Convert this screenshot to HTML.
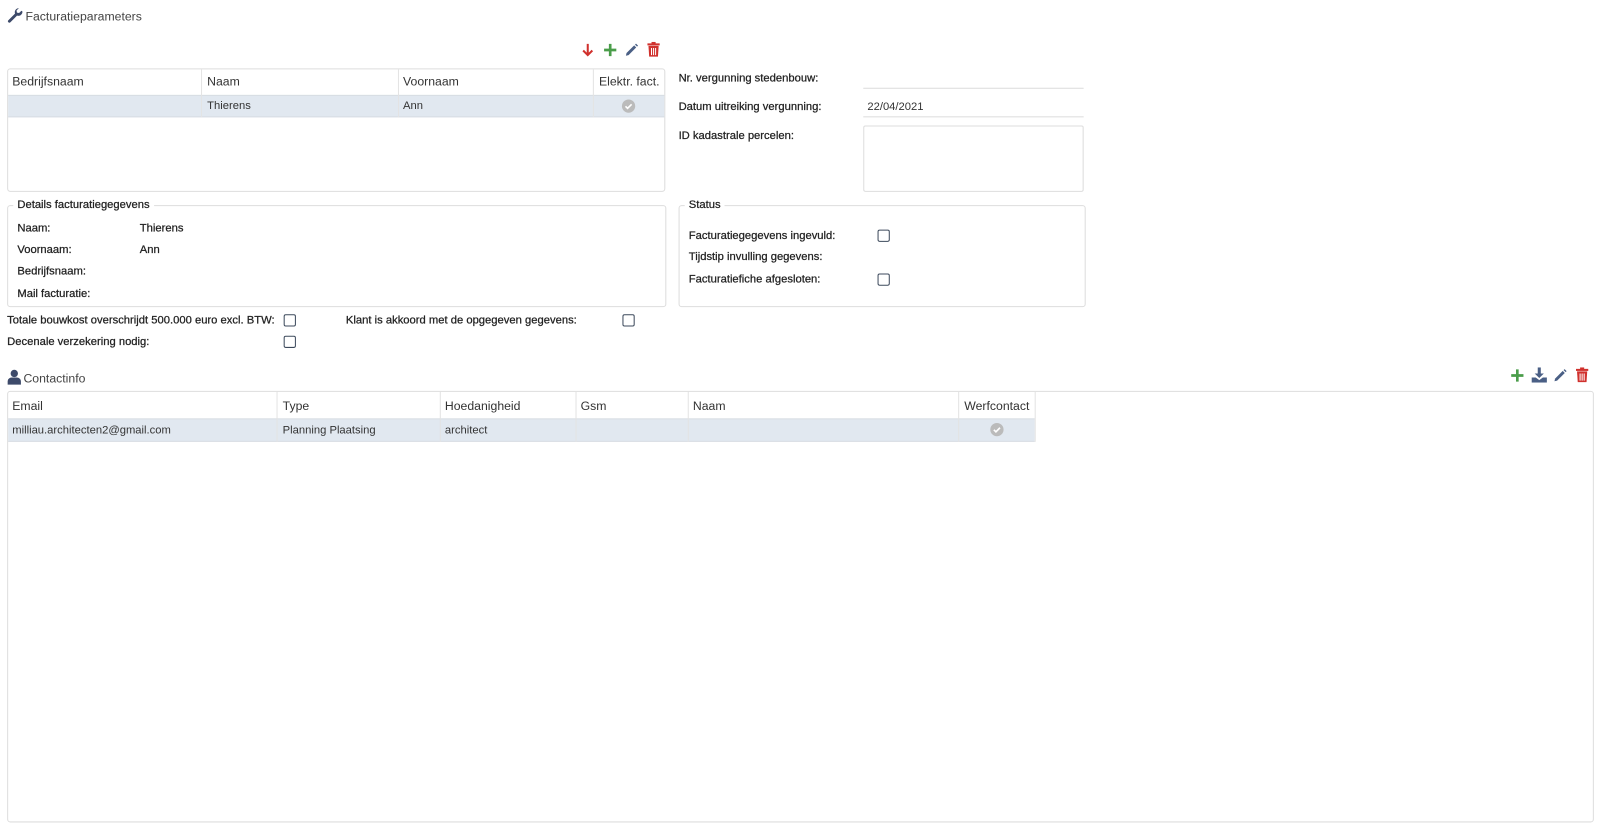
<!DOCTYPE html>
<html><head><meta charset="utf-8"><style>
*{box-sizing:border-box;margin:0;padding:0}
body{width:1600px;height:830px;background:#fff;font-family:"Liberation Sans",sans-serif;font-size:11px;color:#333;position:relative;overflow:hidden}
#w{position:absolute;left:0;top:0;width:1568px;height:814px;transform:scale(1.0204);transform-origin:0 0}
.a{position:absolute;white-space:nowrap}
.box{position:absolute;border:1px solid #ddd;border-radius:3px}
.cb{position:absolute;width:12px;height:12px;border:1.5px solid #3d4a5c;border-radius:2px}
.th{position:absolute;font-size:12px;color:#333}
.vl{position:absolute;width:1px;background:#e3e3e3}
.b{color:#222;-webkit-text-stroke:0.25px #222}
svg{position:absolute}
</style></head><body><div id="w">
<svg style="left:7px;top:7px" width="16" height="16" viewBox="0 0 16 16"><path d="M15 4.5a4 4 0 0 1-5.3 3.8L3.2 14.8a1.4 1.4 0 0 1-2-2l6.5-6.5A4 4 0 0 1 11.5 1l-2.3 2.3.4 2.1 2.1.4L14 3.5c.6.3 1 .6 1 1z" fill="#3d4a6a"/></svg>
<div class="a" style="left:25px;top:9px;font-size:12px;color:#444">Facturatieparameters</div>

<svg style="left:570px;top:42px" width="12" height="14" viewBox="0 0 12 14"><path d="M6 1v11M1.5 7.5 6 12l4.5-4.5" stroke="#d0312d" stroke-width="2" fill="none"/></svg>
<svg style="left:591px;top:42px" width="14" height="14" viewBox="0 0 14 14"><path d="M7 1v12M1 7h12" stroke="#4a9d4a" stroke-width="2.6"/></svg>
<svg style="left:612px;top:42px" width="14" height="14" viewBox="0 0 14 14"><path d="M2 10 9.5 2.5l2 2L4 12l-2.6.6z" fill="#4a5f85"/><path d="M10.3 1.7l1-1 2 2-1 1z" fill="#4a5f85"/></svg>
<svg style="left:634px;top:41px" width="13" height="15" viewBox="0 0 13 15"><rect x="0.5" y="1.5" width="12" height="2" fill="#d0312d"/><rect x="4.5" y="0" width="4" height="2" fill="#d0312d"/><path d="M1.5 4h10l-.7 10.5H2.2z" fill="#d0312d"/><path d="M4.5 6v7M6.5 6v7M8.5 6v7" stroke="#fff" stroke-width="1"/></svg>

<div class="box" style="left:7px;top:67px;width:645px;height:121px"></div>
<div class="a" style="left:8px;top:93px;width:643px;height:22px;background:#e1e8f0;border-top:1px solid #d8dde3;border-bottom:1px solid #d8dde3"></div>
<div class="vl" style="left:197px;top:68px;height:47px"></div>
<div class="vl" style="left:390px;top:68px;height:47px"></div>
<div class="vl" style="left:581px;top:68px;height:47px"></div>
<div class="th" style="left:12px;top:73px">Bedrijfsnaam</div>
<div class="th" style="left:203px;top:73px">Naam</div>
<div class="th" style="left:395px;top:73px">Voornaam</div>
<div class="th" style="left:587px;top:73px">Elektr. fact.</div>
<div class="a" style="left:203px;top:98px">Thierens</div>
<div class="a" style="left:395px;top:98px">Ann</div>
<svg style="left:609px;top:97px" width="14" height="14" viewBox="0 0 14 14"><circle cx="7" cy="7" r="6.5" fill="#bbb"/><path d="M4 7.2l2 2 4-4" stroke="#fff" stroke-width="1.6" fill="none"/></svg>

<div class="a b" style="left:665px;top:71px">Nr. vergunning stedenbouw:</div>
<div class="a b" style="left:665px;top:99px">Datum uitreiking vergunning:</div>
<div class="a b" style="left:665px;top:127px">ID kadastrale percelen:</div>
<div class="a" style="left:846px;top:86px;width:216px;height:1px;background:#ddd"></div>
<div class="a" style="left:850px;top:99px">22/04/2021</div>
<div class="a" style="left:846px;top:114px;width:216px;height:1px;background:#ddd"></div>
<div class="box" style="left:846px;top:123px;width:216px;height:65px;border-radius:2px"></div>

<div class="box" style="left:7px;top:201px;width:646px;height:100px"></div>
<div class="a b" style="left:13px;top:195px;background:#fff;padding:0 4px">Details facturatiegegevens</div>
<div class="a b" style="left:17px;top:218px">Naam:</div><div class="a b" style="left:137px;top:218px">Thierens</div>
<div class="a b" style="left:17px;top:239px">Voornaam:</div><div class="a b" style="left:137px;top:239px">Ann</div>
<div class="a b" style="left:17px;top:260px">Bedrijfsnaam:</div>
<div class="a b" style="left:17px;top:282px">Mail facturatie:</div>

<div class="box" style="left:665px;top:201px;width:399px;height:100px"></div>
<div class="a b" style="left:671px;top:195px;background:#fff;padding:0 4px">Status</div>
<div class="a b" style="left:675px;top:225px">Facturatiegegevens ingevuld:</div><div class="cb" style="left:860px;top:225px"></div>
<div class="a b" style="left:675px;top:246px">Tijdstip invulling gegevens:</div>
<div class="a b" style="left:675px;top:268px">Facturatiefiche afgesloten:</div><div class="cb" style="left:860px;top:268px"></div>

<div class="a b" style="left:7px;top:308px">Totale bouwkost overschrijdt 500.000 euro excl. BTW:</div><div class="cb" style="left:278px;top:308px"></div>
<div class="a b" style="left:339px;top:308px">Klant is akkoord met de opgegeven gegevens:</div><div class="cb" style="left:610px;top:308px"></div>
<div class="a b" style="left:7px;top:329px">Decenale verzekering nodig:</div><div class="cb" style="left:278px;top:329px"></div>

<svg style="left:7px;top:362px" width="14" height="15" viewBox="0 0 14 15"><circle cx="7" cy="4" r="3.6" fill="#3d4a6a"/><path d="M0.5 15v-3c0-2.5 2-4 4-4h5c2 0 4 1.5 4 4v3z" fill="#3d4a6a"/></svg>
<div class="a" style="left:23px;top:364px;font-size:12px;color:#444">Contactinfo</div>

<svg style="left:1480px;top:361px" width="14" height="14" viewBox="0 0 14 14"><path d="M7 1v12M1 7h12" stroke="#4a9d4a" stroke-width="2.6"/></svg>
<svg style="left:1501px;top:360px" width="15" height="15" viewBox="0 0 15 15"><path d="M6 0h3v6h3L7.5 10.5 3 6h3z" fill="#4a5f85"/><path d="M0 10h4l3.5 2.5L11 10h4v5H0z" fill="#4a5f85"/></svg>
<svg style="left:1522px;top:361px" width="14" height="14" viewBox="0 0 14 14"><path d="M2 10 9.5 2.5l2 2L4 12l-2.6.6z" fill="#4a5f85"/><path d="M10.3 1.7l1-1 2 2-1 1z" fill="#4a5f85"/></svg>
<svg style="left:1544px;top:360px" width="13" height="15" viewBox="0 0 13 15"><rect x="0.5" y="1.5" width="12" height="2" fill="#d0312d"/><rect x="4.5" y="0" width="4" height="2" fill="#d0312d"/><path d="M1.5 4h10l-.7 10.5H2.2z" fill="#d0312d"/><path d="M4.5 6v7M6.5 6v7M8.5 6v7" stroke="#fff" stroke-width="1"/></svg>

<div class="box" style="left:7px;top:383px;width:1555px;height:423px"></div>
<div class="a" style="left:8px;top:410px;width:1006px;height:23px;background:#e1e8f0;border-top:1px solid #d8dde3;border-bottom:1px solid #d8dde3"></div>
<div class="vl" style="left:271px;top:384px;height:49px"></div>
<div class="vl" style="left:431px;top:384px;height:49px"></div>
<div class="vl" style="left:564px;top:384px;height:49px"></div>
<div class="vl" style="left:674px;top:384px;height:49px"></div>
<div class="vl" style="left:939px;top:384px;height:49px"></div>
<div class="vl" style="left:1014px;top:384px;height:49px"></div>
<div class="th" style="left:12px;top:391px">Email</div>
<div class="th" style="left:277px;top:391px">Type</div>
<div class="th" style="left:436px;top:391px">Hoedanigheid</div>
<div class="th" style="left:569px;top:391px">Gsm</div>
<div class="th" style="left:679px;top:391px">Naam</div>
<div class="th" style="left:945px;top:391px">Werfcontact</div>
<div class="a" style="left:12px;top:416px">milliau.architecten2@gmail.com</div>
<div class="a" style="left:277px;top:416px">Planning Plaatsing</div>
<div class="a" style="left:436px;top:416px">architect</div>
<svg style="left:970px;top:414px" width="14" height="14" viewBox="0 0 14 14"><circle cx="7" cy="7" r="6.5" fill="#bbb"/><path d="M4 7.2l2 2 4-4" stroke="#fff" stroke-width="1.6" fill="none"/></svg>
</div></body></html>
